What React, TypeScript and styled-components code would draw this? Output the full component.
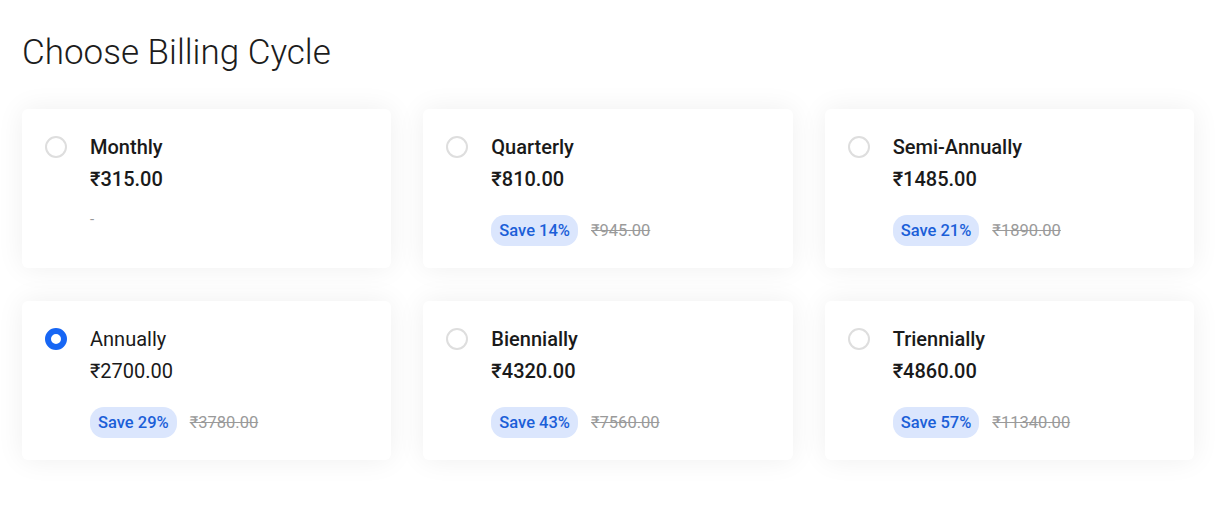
import styled, { createGlobalStyle } from "styled-components";

const GlobalStyle = createGlobalStyle`
  body {
    margin: 0;
    background: #ffffff;
    font-family: Roboto, "Noto Sans", "Liberation Sans", sans-serif;
    color: #1c1c1c;
  }
  * {
    box-sizing: border-box;
  }
`;

const Page = styled.div`
  padding: 32px 34px 40px 22px;
`;

const Title = styled.h1`
  margin: 0 0 35px 0;
  font-size: 35px;
  line-height: 42px;
  font-weight: 300;
  color: #1c1c1c;
`;

const Grid = styled.div`
  display: grid;
  grid-template-columns: repeat(3, 1fr);
  gap: 33px 32px;
`;

const Card = styled.label`
  display: flex;
  gap: 23px;
  align-items: flex-start;
  background: #ffffff;
  border-radius: 6px;
  padding: 26px 23px 22px;
  box-shadow: 0 0 28px rgba(0, 0, 0, 0.065);
  cursor: pointer;
`;

const Radio = styled.span<{ checked: boolean }>`
  flex: none;
  width: 22px;
  height: 22px;
  margin-top: 1px;
  border-radius: 50%;
  background: #ffffff;
  border: ${(props) => (props.checked ? "6px solid #1766f4" : "2px solid #dedede")};
`;

const Body = styled.div`
  display: flex;
  flex-direction: column;
  gap: 8px;
`;

const Name = styled.div<{ checked: boolean }>`
  font-size: 20px;
  line-height: 24px;
  font-weight: ${(props) => (props.checked ? 400 : 500)};
  color: #1a1a1a;
`;

const Price = styled.div<{ checked: boolean }>`
  font-size: 20px;
  line-height: 24px;
  font-weight: ${(props) => (props.checked ? 400 : 500)};
  color: #1a1a1a;
`;

const SaveRow = styled.div`
  display: flex;
  align-items: center;
  gap: 13px;
  margin-top: 16px;
`;

const Badge = styled.span`
  display: inline-flex;
  align-items: center;
  height: 31px;
  padding: 0 8px;
  border-radius: 14px;
  background: #dbe6fd;
  color: #1b5fd8;
  font-size: 16.5px;
  font-weight: 500;
`;

const OldPrice = styled.span`
  font-size: 16.5px;
  color: #9a9a9a;
  text-decoration: line-through;
`;

const Empty = styled.div`
  margin-top: 10px;
  font-size: 15px;
  line-height: 20px;
  color: #999999;
`;

interface Cycle {
  name: string;
  price: string;
  save?: string;
  old?: string;
}

const cycles: Cycle[] = [
  { name: "Monthly", price: "₹315.00" },
  { name: "Quarterly", price: "₹810.00", save: "Save 14%", old: "₹945.00" },
  { name: "Semi-Annually", price: "₹1485.00", save: "Save 21%", old: "₹1890.00" },
  { name: "Annually", price: "₹2700.00", save: "Save 29%", old: "₹3780.00" },
  { name: "Biennially", price: "₹4320.00", save: "Save 43%", old: "₹7560.00" },
  { name: "Triennially", price: "₹4860.00", save: "Save 57%", old: "₹11340.00" },
];

function App() {
  const selected = "Annually";
  return (
    <Page>
      <GlobalStyle />
      <Title>Choose Billing Cycle</Title>
      <Grid>
        {cycles.map((c) => {
          const checked = c.name === selected;
          return (
            <Card key={c.name}>
              <Radio checked={checked} />
              <Body>
                <Name checked={checked}>{c.name}</Name>
                <Price checked={checked}>{c.price}</Price>
                {c.save ? (
                  <SaveRow>
                    <Badge>{c.save}</Badge>
                    <OldPrice>{c.old}</OldPrice>
                  </SaveRow>
                ) : (
                  <Empty>-</Empty>
                )}
              </Body>
            </Card>
          );
        })}
      </Grid>
    </Page>
  );
}

export default App;
